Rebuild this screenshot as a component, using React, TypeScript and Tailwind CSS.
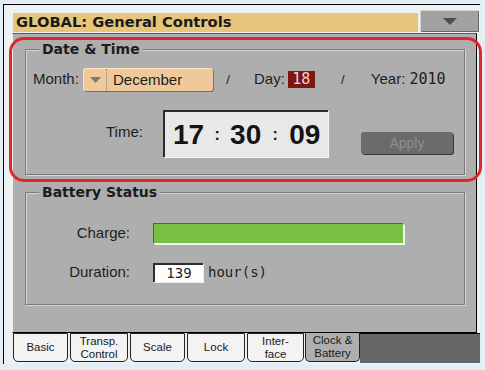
import React from "react";

const sans = { fontFamily: '"Liberation Sans", Arial, sans-serif' };
const bold = { fontFamily: '"DejaVu Sans", "Liberation Sans", sans-serif' };
const mono = { fontFamily: '"DejaVu Sans Mono", "Liberation Mono", monospace' };

function Group({ title, className, children }: { title: string; className: string; children: React.ReactNode }) {
  return (
    <div
      className={`relative ml-[12px] w-[440px] border border-[#7a7a7a] shadow-[inset_1px_1px_0_#d6d6d6,1px_1px_0_#d6d6d6] ${className}`}
    >
      <span
        className="absolute left-[13px] top-[-10px] bg-[#aeaeae] px-[3px] text-[14px] font-bold leading-[18px] text-[#1c1c1c]"
        style={bold}
      >
        {title}
      </span>
      {children}
    </div>
  );
}

function Tab({ label, w, selected }: { label: React.ReactNode; w: string; selected?: boolean }) {
  return (
    <div
      className={`${w} h-[29px] flex items-center justify-center text-center text-[11.5px] leading-[13px] text-[#1a1a1a] rounded-b-[5px] border-x border-b border-[#222] ${
        selected ? "bg-[#aeaeae] border-t-0" : "bg-[#f3f3f3] border-t"
      }`}
      style={sans}
    >
      {label}
    </div>
  );
}

export default function App() {
  return (
    <div className="w-[485px] h-[370px] bg-[#e4edf3] relative overflow-hidden pt-[4px] pl-[3px]">
      <div className="w-[477px] h-[360px] bg-[#eef1f2] border-l border-t border-black flex flex-col">
        {/* Title row */}
        <div className="h-[28px] flex">
          <div className="ml-[9px] mt-[8px] h-[19px] w-[405px] bg-[#e7c67c] pl-[3px] flex items-center">
            <span className="text-[14.7px] font-bold text-[#1a1a1a] leading-none" style={bold}>
              GLOBAL: General Controls
            </span>
          </div>
          <div className="ml-[2px] mt-[5px] w-[58px] h-[21px] bg-[#a2a2a2] border-t border-l border-[#d4d4d4] shadow-[1px_1px_0_#6a6a6a] flex items-center justify-center">
            <svg width="14" height="7" viewBox="0 0 14 7">
              <polygon points="0,0 14,0 7,7" fill="#4e4e4e" />
            </svg>
          </div>
        </div>

        {/* Panel */}
        <div className="ml-[8px] w-[465px] h-[300px] bg-[#aeaeae] border-t border-t-[#5c5c5c] border-l border-l-[#f2f2f2] border-r border-r-black border-b border-b-black">
          <Group title="Date & Time" className="mt-[15px] h-[126px]">
            {/* Row 1 */}
            <div className="mt-[18px] h-[23px] pl-[7px] flex items-center text-[15px] text-[#1e1e1e]" style={sans}>
              <span className="w-[47px]">Month:</span>
              <div className="ml-[3px] w-[130px] h-[23px] rounded-[3px] bg-[#f0c99b] border-t border-l border-[#fbe3c5] shadow-[1px_1px_0_#7d6e5c] flex items-center">
                <div className="w-[23px] h-full flex items-center justify-center border-r border-dotted border-[#9a7f5e]">
                  <svg width="11" height="6" viewBox="0 0 11 6">
                    <polygon points="0,0 11,0 5.5,6" fill="#7a7a7a" />
                  </svg>
                </div>
                <span className="ml-[6px]">December</span>
              </div>
              <span className="w-[30px] text-center text-[13px]">/</span>
              <span className="ml-[11px]">Day:</span>
              <div className="ml-[3px] w-[27px] h-[17px] bg-[#7b1611] text-[#f3d2d2] text-[15px] leading-[17px] text-center" style={mono}>
                18
              </div>
              <span className="w-[56px] text-center text-[13px]">/</span>
              <span>Year: <span style={mono}>2010</span></span>
            </div>
            {/* Row 2 */}
            <div className="mt-[19px] h-[47px] flex items-start text-[15px] text-[#1e1e1e]" style={sans}>
              <span className="ml-[80px] h-[47px] flex items-center pb-[2px]">Time:</span>
              <div className="ml-[20px] w-[165px] h-[47px] bg-[#e8e8e8] border-t-2 border-l-2 border-[#2c2c2c] shadow-[1px_1px_0_#f5f5f5] flex items-center pl-[8px] text-[28px] font-bold text-[#141414]" style={sans}>
                <span>17</span>
                <span className="w-[26px] text-center text-[16px]">:</span>
                <span>30</span>
                <span className="w-[28px] text-center text-[16px]">:</span>
                <span>09</span>
              </div>
              <div className="ml-[33px] mt-[22px] w-[92px] h-[22px] rounded-[3px] bg-[#6b6b6b] shadow-[1px_1px_0_#3a3a3a] flex items-center justify-center text-[14px] text-[#8e8e8e]">
                Apply
              </div>
            </div>
          </Group>

          <Group title="Battery Status" className="mt-[17px] h-[113px]">
            <div className="mt-[30px] h-[20px] flex items-center text-[15px] text-[#1e1e1e]" style={sans}>
              <span className="w-[104px] text-right">Charge:</span>
              <div className="ml-[23px] w-[250px] h-[20px] bg-[#77c043] border-t border-l border-[#5a5a5a] shadow-[1px_1px_0_#f4f4f4,2px_2px_0_#f4f4f4]" />
            </div>
            <div className="mt-[20px] h-[19px] flex items-center text-[15px] text-[#1e1e1e]" style={sans}>
              <span className="w-[104px] text-right">Duration:</span>
              <div className="ml-[23px] w-[50px] h-[19px] bg-white border-t-2 border-l-2 border-[#2e2e2e] shadow-[1px_1px_0_#eeeeee] text-center text-[14px] leading-[17px]" style={mono}>
                139
              </div>
              <span className="ml-[5px] text-[14px]" style={mono}>hour(s)</span>
            </div>
          </Group>
        </div>

        {/* Tabs row */}
        <div className="h-[31px] flex">
          <div className="ml-[9px] flex gap-[2px]">
            <Tab w="w-[55px]" label="Basic" />
            <Tab w="w-[58px]" label={<span>Transp.<br />Control</span>} />
            <Tab w="w-[55px]" label="Scale" />
            <Tab w="w-[58px]" label="Lock" />
            <Tab w="w-[57px]" label={<span>Inter-<br />face</span>} />
          </div>
          <div className="ml-[1px]">
            <Tab w="w-[55px]" label={<span>Clock &amp;<br />Battery</span>} selected />
          </div>
          <div className="flex-1 h-[30px] bg-[#676767] border-t border-black" />
        </div>
      </div>

      {/* Red highlight overlay */}
      <div className="absolute left-[9px] top-[37px] w-[473px] h-[145px] border-[3px] border-[#e1252b] rounded-[15px] pointer-events-none" />
    </div>
  );
}
